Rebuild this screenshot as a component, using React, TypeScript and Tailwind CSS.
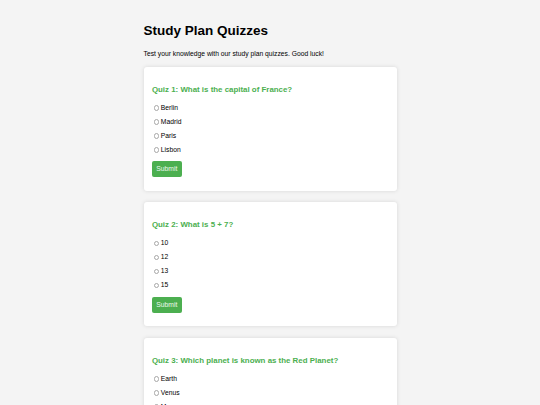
import React from "react";

type Quiz = { title: string; options: string[] };

const quizzes: Quiz[] = [
  { title: "Quiz 1: What is the capital of France?", options: ["Berlin", "Madrid", "Paris", "Lisbon"] },
  { title: "Quiz 2: What is 5 + 7?", options: ["10", "12", "13", "15"] },
  { title: "Quiz 3: Which planet is known as the Red Planet?", options: ["Earth", "Venus", "Mars", "Jupiter"] },
];

function QuizCard({ quiz }: { quiz: Quiz }) {
  return (
    <div className="bg-white rounded-[3px] shadow-[0_0_4px_rgba(0,0,0,0.12)] px-[8.4px] pt-[18px] pb-[13.5px]">
      <h3 className="text-[7.9px] leading-[9px] font-bold text-[#4CAF50]">{quiz.title}</h3>
      <div className="mt-[7px] flex flex-col">
        {quiz.options.map((o) => (
          <label key={o} className="h-[14px] flex items-center">
            <span className="ml-[2.1px] mr-[1.3px] w-[5.5px] h-[5.5px] rounded-full border-[0.5px] border-[#a8a8a8] bg-white" />
            <span className="text-[6.75px] leading-[8px]">{o}</span>
          </label>
        ))}
      </div>
      <button className="mt-[4.5px] h-[16px] px-[4.4px] bg-[#4CAF50] text-[#eef8ee] text-[6.75px] leading-[8px] font-normal rounded-[2px] flex items-center">
        Submit
      </button>
    </div>
  );
}

export default function App() {
  return (
    <div className="min-h-screen bg-[#f4f4f4] text-black font-['Liberation_Sans',Arial,sans-serif] pt-[23.3px] pb-[10px]">
      <div className="w-[253px] mx-auto">
        <h1 className="text-[13.5px] leading-[16px] font-bold">Study Plan Quizzes</h1>
        <p className="mt-[10.4px] text-[6.75px] leading-[8px]">
          Test your knowledge with our study plan quizzes. Good luck!
        </p>
        <div className="mt-[9.3px] flex flex-col gap-[11.5px]">
          {quizzes.map((q) => (
            <QuizCard key={q.title} quiz={q} />
          ))}
        </div>
      </div>
    </div>
  );
}
